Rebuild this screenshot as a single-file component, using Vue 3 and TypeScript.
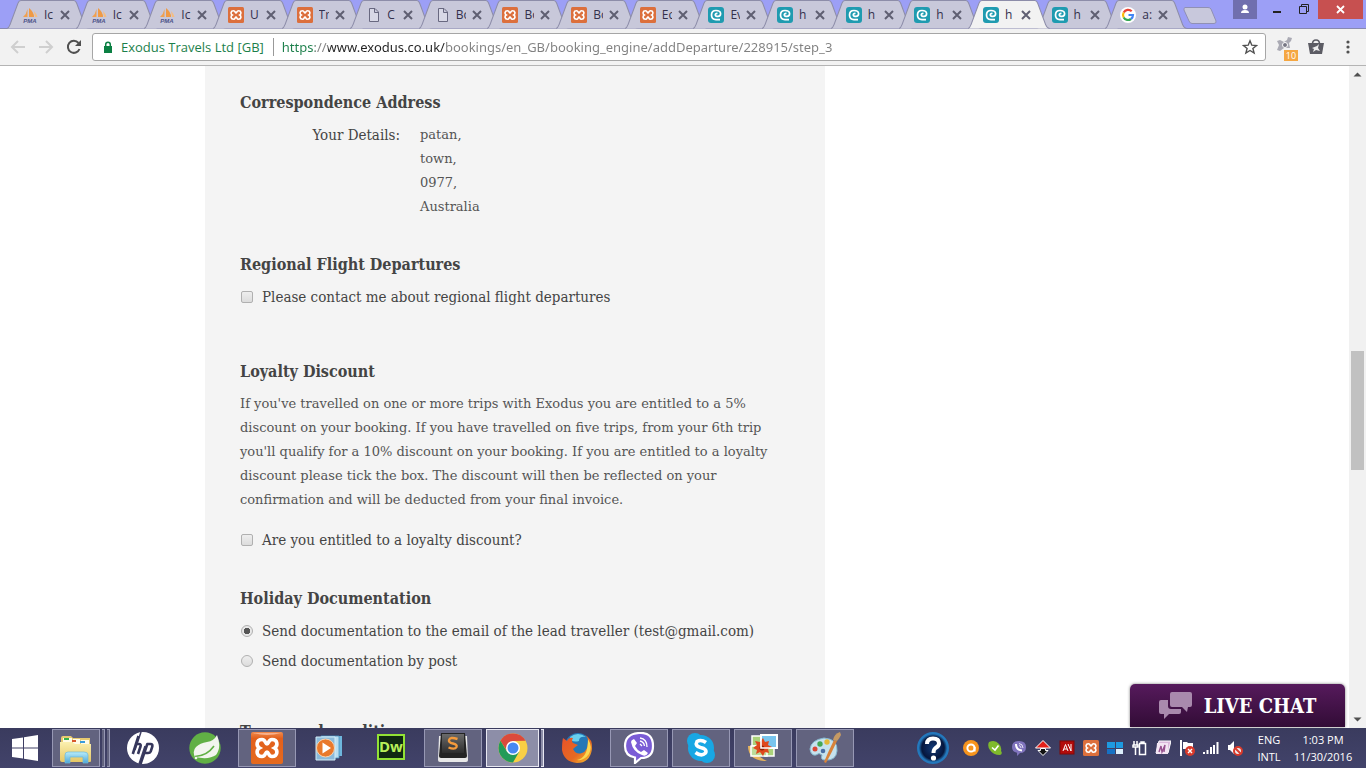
<script setup lang="ts">
import { ref } from 'vue'

interface Tab { icon: string; label: string; active?: boolean }
interface Task { icon: string; name: string; state?: 'open' | 'active'; stacked?: boolean }

const tabs: Tab[] = [
  { icon: 'pma', label: 'Ic' },
  { icon: 'pma', label: 'Ic' },
  { icon: 'pma', label: 'Ic' },
  { icon: 'xampp', label: 'U' },
  { icon: 'xampp', label: 'Tr' },
  { icon: 'doc', label: 'C' },
  { icon: 'doc', label: 'Bo' },
  { icon: 'xampp', label: 'Bo' },
  { icon: 'xampp', label: 'Bo' },
  { icon: 'xampp', label: 'Ec' },
  { icon: 'exodus', label: 'Ev' },
  { icon: 'exodus', label: 'h' },
  { icon: 'exodus', label: 'h' },
  { icon: 'exodus', label: 'h' },
  { icon: 'exodus', label: 'h', active: true },
  { icon: 'exodus', label: 'h' },
  { icon: 'google', label: 'a:' },
]

const tasks: Task[] = [
  { icon: 'explorer', name: 'File Explorer', state: 'open', stacked: true },
  { icon: 'hp', name: 'HP' },
  { icon: 'spring', name: 'Spring' },
  { icon: 'xampp-big', name: 'XAMPP', state: 'open' },
  { icon: 'media', name: 'Media Player' },
  { icon: 'dw', name: 'Dreamweaver' },
  { icon: 'sublime', name: 'Sublime Text', state: 'open' },
  { icon: 'chrome', name: 'Chrome', state: 'active', stacked: true },
  { icon: 'firefox', name: 'Firefox' },
  { icon: 'viber', name: 'Viber', state: 'open' },
  { icon: 'skype', name: 'Skype', state: 'open' },
  { icon: 'photos', name: 'Photo Gallery', state: 'open' },
  { icon: 'paint', name: 'Paint', state: 'open' },
]

const tray: string[] = ['avast', 'agent', 'viber-s', 'arrows', 'adobe', 'xampp', 'tiles', 'battery', 'note', 'flag', 'signal', 'mute']

const address = ['patan,', 'town,', '0977,', 'Australia']
const url = ref('https://www.exodus.co.uk/bookings/en_GB/booking_engine/addDeparture/228915/step_3')
const regional = ref(false)
const loyalty = ref(false)
const documentation = ref('email')
</script>

<template>
  <div class="desktop">
    <svg class="defs" aria-hidden="true">
      <defs>
        <linearGradient id="g-folder" x1="0" y1="0" x2="0" y2="1"><stop offset="0" stop-color="#fbf0b0" /><stop offset="1" stop-color="#e5c765" /></linearGradient>
        <linearGradient id="g-blue" x1="0" y1="0" x2="0" y2="1"><stop offset="0" stop-color="#b8ecfa" /><stop offset="1" stop-color="#4fa8d8" /></linearGradient>
        <linearGradient id="g-orange" x1="0" y1="0" x2="0" y2="1"><stop offset="0" stop-color="#f08a4c" /><stop offset=".2" stop-color="#e2601c" /><stop offset="1" stop-color="#e56a1e" /></linearGradient>
        <linearGradient id="g-key" x1="0" y1="0" x2="0" y2="1"><stop offset="0" stop-color="#6a6a6a" /><stop offset="1" stop-color="#2d2d2d" /></linearGradient>
        <radialGradient id="g-help"><stop offset="0" stop-color="#123a78" /><stop offset=".75" stop-color="#06163c" /><stop offset="1" stop-color="#2d8fd8" /></radialGradient>
        <linearGradient id="g-fox" x1="0" y1="0" x2="1" y2="1"><stop offset="0" stop-color="#e8502a" /><stop offset=".6" stop-color="#e66a22" /><stop offset="1" stop-color="#f8c830" /></linearGradient>
      </defs>
      <symbol id="i-pma" viewBox="0 0 16 16">
        <path d="M5.500 2 L5.500 10 L1 10 Q4.500 7 5.500 2Z" fill="#f0a050" /><path d="M7 1 Q12 5 12 10 L7 10Z" fill="#ef9a45" /><path d="M12 4 Q15 7 15.500 10 L13 10Z" fill="#f6bd80" />
        <text x="8" y="16" text-anchor="middle" font-family="Liberation Sans" font-size="6" font-weight="700" font-style="italic" fill="#4c5288">PMA</text>
      </symbol>
      <symbol id="i-xampp" viewBox="0 0 32 32">
        <rect width="32" height="32" rx="3" fill="#dc6f3c" />
        <path d="M11 7.500 C5 7.500 5 14 8.500 16 C5 18 5 24.500 11 24.500 C15 24.500 14 20 16 20 C18 20 17 24.500 21 24.500 C27 24.500 27 18 23.500 16 C27 14 27 7.500 21 7.500 C17 7.500 18 12 16 12 C14 12 15 7.500 11 7.500Z" fill="none" stroke="#fff" stroke-width="3.200" />
      </symbol>
      <symbol id="i-doc" viewBox="0 0 16 16">
        <path d="M4.500 1.500 H10 L13.500 5 V14.500 H4.500Z M9.500 1.500 V5.500 H13.500" fill="#d8d8e6" stroke="#686880" />
      </symbol>
      <symbol id="i-exodus" viewBox="0 0 16 16">
        <rect width="16" height="16" rx="3" fill="#1f9bb0" />
        <path d="M9.500 6.500 Q7.300 6.200 7.300 7.800 Q7.300 9.400 9 9.400 H10 Q12.600 9.400 12.600 6.500 Q12.300 3.500 8 3.500 Q3.500 3.500 3.500 8 Q3.500 12.500 8 12.700 H12" fill="none" stroke="#fff" stroke-width="1.700" />
      </symbol>
      <symbol id="i-google" viewBox="0 0 16 16">
        <circle cx="8" cy="8" r="8" fill="#fff" />
        <g fill="none" stroke-width="2.200"><path d="M11.700 4.300 A5 5 0 0 0 3.700 5.500" stroke="#ea4335" /><path d="M3.700 5.500 A5 5 0 0 0 3.700 10.500" stroke="#fbbc05" /><path d="M3.700 10.500 A5 5 0 0 0 11 12" stroke="#34a853" /><path d="M11 12 A5 5 0 0 0 13 8 H8.500" stroke="#4285f4" /></g>
      </symbol>
      <symbol id="i-explorer" viewBox="0 0 32 32">
        <path d="M1 6 Q1 4 3 4 H11 L13 6 H30 V23 H1Z" fill="#e6ca70" /><path d="M3 6 H12 V12 H3Z M13 7 H20 V12 H13Z M21 8 H29 V13 H21Z" fill="#fffbe6" />
        <path d="M4 6h5v2H4z" fill="#35b04a" /><path d="M12 8h4v2h-4z" fill="#d8582c" /><path d="M20 9h5v2h-5z" fill="#3b9cdc" />
        <path d="M0 10 H12 L15 12 H31 V29 Q31 30 30 30 H2 Q0 30 0 28Z" fill="url(#g-folder)" />
        <path d="M5 31 V23 Q5 20 8 20 H24 Q28 20 28 23 V31 H23 V25 H10 V31Z" fill="url(#g-blue)" stroke="#6bb9dd" stroke-width=".7" />
      </symbol>
      <symbol id="i-hp" viewBox="0 0 32 32">
        <circle cx="16" cy="16" r="16" fill="#fff" />
        <path d="M14 0 L8 18 M18 14 L12 32" stroke="#404066" stroke-width="1.500" />
        <g fill="none" stroke="#36375c" stroke-width="2.600"><path d="M11.500 4 L5.800 22 M9.200 12 H12 Q14.300 12 13.500 14.500 L11 22" /><path d="M20.500 11.500 L13.500 32 M19.800 12 H23.500 Q26 12 25.200 15 L23.700 19.500 Q23 21 21 21 H17.500" /></g>
      </symbol>
      <symbol id="i-spring" viewBox="0 0 32 32">
        <circle cx="16" cy="16" r="15.700" fill="#61b045" />
        <path d="M28 3 Q33 15 27 23 Q20 28 6 25 Q3 19 7 15 Q11 11 18 10 Q25 9 28 3Z" fill="#f2f5ee" /><path d="M6 24.500 Q18 24 25 14" fill="none" stroke="#61b045" stroke-width="1.600" /><circle cx="7" cy="26" r="1.300" fill="#f2f5ee" />
      </symbol>
      <symbol id="i-xampp-big" viewBox="0 0 32 32">
        <rect width="32" height="32" rx="2" fill="url(#g-orange)" /><path d="M2 1 H30 Q16 5 2 1Z" fill="#f8b08a" />
        <path d="M11 7.500 C5 7.500 5 14 8.500 16 C5 18 5 24.500 11 24.500 C15 24.500 14 20 16 20 C18 20 17 24.500 21 24.500 C27 24.500 27 18 23.500 16 C27 14 27 7.500 21 7.500 C17 7.500 18 12 16 12 C14 12 15 7.500 11 7.500Z" fill="none" stroke="#fff" stroke-width="3.600" />
      </symbol>
      <symbol id="i-media" viewBox="0 0 32 32">
        <path d="M12 4 H29 V24 H12Z" fill="#6eb7dd" /><path d="M8 4 H26 V26 H8Z" fill="#b9def0" stroke="#4793c0" stroke-width=".8" /><path d="M3 5 H22 V28 H3Z" fill="#8bbada" stroke="#d2edf8" />
        <circle cx="12.500" cy="16" r="9" fill="#e9792b" stroke="#f8d4b0" /><path d="M9.500 10.500 L18 16 L9.500 21.500Z" fill="#fff" />
      </symbol>
      <symbol id="i-dw" viewBox="0 0 32 32">
        <rect x="3" y="3" width="26" height="24" fill="#102a12" stroke="#92e335" stroke-width="2" />
        <text x="16" y="20" text-anchor="middle" font-family="Open Sans" font-size="15" font-weight="700" fill="#b8f05a">Dw</text>
      </symbol>
      <symbol id="i-sublime" viewBox="0 0 32 32">
        <path d="M2 4 H30 L31 28 Q31 30 29 30 H3 Q1 30 1 28Z" fill="#e8e8e8" /><path d="M4 1 H28 L30 24 Q30 26 28 26 H4 Q2 26 2 24Z" fill="#242424" /><path d="M5 2 H27 V21 H5Z" fill="url(#g-key)" />
        <path d="M20.500 7 Q13 4.500 12 8 Q11.500 10.500 16 11.500 Q20.500 12.500 19.500 15 Q18 18 11.500 15.500" fill="none" stroke="#f39a3c" stroke-width="2.400" />
      </symbol>
      <symbol id="i-chrome" viewBox="0 0 32 32">
        <circle cx="16" cy="16" r="14.500" fill="#f9cf45" />
        <path d="M3.400 8.800 A14.500 14.500 0 0 1 28.600 8.800 L16 9 L10 19Z" fill="#db4a3c" /><path d="M3.400 8.800 A14.500 14.500 0 0 0 16 30.500 L22 20 L10 19.500Z" fill="#229b58" /><circle cx="16" cy="16" r="7" fill="#fff" /><circle cx="16" cy="16" r="5.500" fill="#4688f1" />
      </symbol>
      <symbol id="i-firefox" viewBox="0 0 32 32">
        <circle cx="17" cy="14" r="13" fill="#2478b8" /><path d="M9 5 Q17 -1 25 5 Q18 4 18 9 Q10 11 9 5Z" fill="#68cfee" />
        <path d="M2 6 L6 9 Q8 5 12 6 Q10 9 12 11 L17 13 Q14 15 12 17 Q15 23 21 21 Q27 19 27 9 Q27 5 24 3 Q32 7 31 17 Q29 31 16 31 Q3 30 1 18 Q1 10 2 6Z" fill="url(#g-fox)" /><path d="M27 7 Q32 15 28 22 Q23 29 16 28 Q27 26 27 7Z" fill="#fbd850" />
      </symbol>
      <symbol id="i-viber" viewBox="0 0 32 32">
        <path d="M16 1 Q30 0 30 14 Q30 26 18 26 L12 31 V25.500 Q2 24 2 14 Q2 2 16 1Z" fill="#7a5cd6" stroke="#fff" stroke-width="2.200" />
        <path d="M11 7 L14 11 L12 14 Q14 18 18 20 L21 18 L25 21 Q23 25 19 23 Q10 20 8 10 Q8 8 11 7Z" fill="#fff" /><path d="M17 6 Q24 7 24 15 M17 9 Q21 10 21.500 14 M17 12 L19 14" fill="none" stroke="#fff" stroke-width="1.300" />
      </symbol>
      <symbol id="i-skype" viewBox="0 0 32 32">
        <circle cx="16" cy="16" r="13" fill="#18a7e4" /><circle cx="10" cy="9" r="8" fill="#18a7e4" /><circle cx="22" cy="23" r="8" fill="#18a7e4" />
        <path d="M21 10.500 Q16 7 12 9.500 Q9.500 14 15.500 15.500 Q22.500 17 20.500 21 Q16.500 25 10.500 20.500" fill="none" stroke="#fff" stroke-width="3.600" />
      </symbol>
      <symbol id="i-photos" viewBox="0 0 32 32">
        <path d="M1 14 Q1 29 20 29 Q8 24 7 14Z" fill="#e6b45e" /><path d="M5 4 H15 V14 H5Z M18 15 H27 V24 H18Z" fill="#aad27a" stroke="#fff" stroke-width="1.500" />
        <path d="M4 14 H20 V24 H4Z" fill="#bcdc9a" stroke="#fff" stroke-width="1.500" />
        <path d="M14 3 H30 V16 H14Z" fill="#79c5ee" stroke="#fff" stroke-width="2" />
        <path d="M16 6 L18 10 L22 9 L21 13 L25 15 L21 17 L22 21 L18 20 L16 24 L13 20 L9 22 L10 18 L6 16 L10 13 L8 9 L13 10Z" fill="#df491d" /><circle cx="15" cy="16" r="2.500" fill="#8f2308" />
        <path d="M14 4 V16 H29" fill="none" stroke="#fff" stroke-width="1.600" />
      </symbol>
      <symbol id="i-paint" viewBox="0 0 32 32">
        <path d="M15 6 Q29 7 28 19 Q27 29 16 28 Q11 28 13 23 Q10 20 7 23 Q2 24 1 17 Q2 8 15 6Z" fill="#c6e2ee" stroke="#86b9d0" /><circle cx="6" cy="17" r="2.500" fill="#d94736" /><circle cx="11" cy="12" r="2.700" fill="#43a755" /><circle cx="18" cy="10" r="2.700" fill="#e2b838" /><circle cx="14" cy="19" r="2.300" fill="#4a6fa4" />
        <path d="M25 8 L28 9 Q23 20 17 31 L15 30 Q20 18 25 8Z" fill="#d8833a" /><path d="M24 8 Q25 2 31 0 L32 3 Q30 7 28 9Z" fill="#c69a64" />
      </symbol>
      <symbol id="i-avast" viewBox="0 0 16 16"><circle cx="8" cy="8" r="8" fill="#f7941d" /><circle cx="8" cy="8" r="3.600" fill="none" stroke="#fff" stroke-width="2" /><path d="M11.600 7 V11.500" stroke="#fff" stroke-width="2" /></symbol>
      <symbol id="i-agent" viewBox="0 0 16 16"><path d="M2 2 Q8 -1 12 4 Q15 7 14 11 Q16 14 13 15 Q6 15 3 10 Q0 6 2 2Z" fill="#7fba2c" /><path d="M5 7.500 L8 10 L11.500 5.500" fill="none" stroke="#fff" stroke-width="1.600" /></symbol>
      <symbol id="i-viber-s" viewBox="0 0 16 16"><path d="M8 1 Q15 1 15 7 Q15 13 9 13 L6 16 V12.700 Q1 12 1 7 Q1 1 8 1Z" fill="#8074bd" /><path d="M5 4 Q5 10 11 10.500" stroke="#fff" stroke-width="2" fill="none" /><path d="M8 3.500 Q12 4 12 8 M8 5.500 Q10 6 10 8" stroke="#fff" stroke-width=".8" fill="none" /></symbol>
      <symbol id="i-arrows" viewBox="0 0 16 16"><path d="M8 .5 L15.500 8 H.5Z" fill="#e32019" stroke="#fff" /><path d="M5.500 8.500 H10.500 V10.500 H13 L8 15.500 L3 10.500 H5.500Z" fill="#111" stroke="#fff" /></symbol>
      <symbol id="i-adobe" viewBox="0 0 16 16"><rect x="1" y="1" width="14" height="13" fill="#b30b0b" stroke="#7e0909" /><path d="M4 11 L6.500 4.500 L9 11 M5 9 H8 M9 4 L12 11 V4" stroke="#fff" fill="none" /></symbol>
      <symbol id="i-tiles" viewBox="0 0 16 16"><path d="M0 2h8v6H0zM9 2h7v6H9z" fill="#1e9ae0" /><path d="M0 9h8v5H0z" fill="#1671c4" /><path d="M9 9h7v5H9z" fill="#dceefb" /></symbol>
      <symbol id="i-battery" viewBox="0 0 16 16"><path d="M8.500 3.500 H14.500 V14.500 H8.500Z M10 2h3v1h-3z" stroke="#fff" stroke-width="1.500" fill="none" /><path d="M3 1 V5 M6 1 V5 M1.500 5 H7 V7 H2 V5 M4.500 7 V15" stroke="#fff" stroke-width="1.500" fill="none" /></symbol>
      <symbol id="i-note" viewBox="0 0 16 16"><path d="M4 1 H16 L13 13 H1Z" fill="#dbb9dc" stroke="#fff" /><path d="M2 3 H13 V14 H1Z" fill="#f3e5f3" /><path d="M4 12 L6 6 L7 12 L10 5 L9 12" stroke="#96508e" stroke-width="1.400" fill="none" /></symbol>
      <symbol id="i-flag" viewBox="0 0 16 16"><path d="M2 0 V16" stroke="#fff" stroke-width="2" /><path d="M4 2 H8 L9 3 H14 V9 H4Z" fill="#fff" /><circle cx="11" cy="11" r="5" fill="#d93a2b" /><path d="M9 9 L13 13 M13 9 L9 13" stroke="#fff" stroke-width="1.400" /></symbol>
      <symbol id="i-signal" viewBox="0 0 16 16"><path d="M1 14 V12 M4.500 14 V10 M8 14 V7 M11 14 V5 M14.500 14 V2" stroke="#fff" stroke-width="2" /></symbol>
      <symbol id="i-mute" viewBox="0 0 16 16"><path d="M1 5 H3 L7 1 V14 L3 10 H1Z" fill="#fff" /><circle cx="11" cy="11" r="4" fill="#eee" stroke="#d93a2b" stroke-width="2" /><path d="M8 8 L14 14" stroke="#d93a2b" stroke-width="2" /></symbol>
    </svg>

    <header class="titlebar">
      <nav class="tabs" aria-label="Tabs">
        <div v-for="(tab, i) in tabs" :key="i" class="tab" :class="{ active: tab.active }">
          <svg class="tab-shape" viewBox="0 0 82 27" preserveAspectRatio="none"><path d="M0 26.500 Q2 26 3 23 L11 3 Q12 .5 14 .5 H67 Q69 .5 70 3 L78 23 Q79 26 82 26.500" /></svg>
          <svg class="favicon"><use :href="`#i-${tab.icon}`" /></svg>
          <span class="tab-label">{{ tab.label }}</span>
          <button class="tab-close" aria-label="Close tab"><svg viewBox="0 0 10 10"><path d="M1 1 L9 9 M9 1 L1 9" /></svg></button>
        </div>
      </nav>
      <button class="new-tab" aria-label="New tab"><svg viewBox="0 0 34 17"><path d="M2 .5 H25 Q27 .5 28 2 L33 14 Q33.500 16.500 31 16.500 H9 Q7 16.500 6 14 L1 3 Q.5 1 2 .5Z" fill="#c8c8dc" stroke="#9090b4" /></svg></button>
      <div class="window-controls">
        <button class="user" aria-label="Profile"><svg viewBox="0 0 24 19"><circle cx="12" cy="7" r="2.500" fill="#fff" /><path d="M8 13 Q8 10 12 10 Q16 10 16 13Z" fill="#fff" /></svg></button>
        <button class="min" aria-label="Minimise"><svg viewBox="0 0 10 19"><path d="M1 12 H9" stroke="#222" stroke-width="2" /></svg></button>
        <button class="restore" aria-label="Restore"><svg viewBox="0 0 12 19"><path d="M1.500 6.500 H8.500 V13.500 H1.500Z M3.500 6 V4.500 H10.500 V11.500 H9" fill="none" stroke="#222" /></svg></button>
        <button class="close" aria-label="Close"><svg viewBox="0 0 45 19"><path d="M19 6 L26 13 M26 6 L19 13" stroke="#fff" stroke-width="1.800" /></svg></button>
      </div>
    </header>

    <div class="toolbar">
      <div class="nav-buttons">
        <button aria-label="Back"><svg viewBox="0 0 16 16" stroke="#cfcfcf"><path d="M15 8 H2 M8 2 L2 8 L8 14" /></svg></button>
        <button aria-label="Forward"><svg viewBox="0 0 16 16" stroke="#cfcfcf"><path d="M1 8 H14 M8 2 L14 8 L8 14" /></svg></button>
        <button aria-label="Reload"><svg viewBox="0 0 16 16" stroke="#505050"><path d="M13.500 10 A6 6 0 1 1 12.500 4" /><path d="M15 1 V7 H9Z" fill="#505050" stroke="none" /></svg></button>
      </div>
      <div class="omnibox">
        <button class="identity"><svg viewBox="0 0 10 13"><path d="M1 5 H9 V12 H1Z" fill="#0b8043" /><path d="M2.700 6 V3.500 Q2.700 1.200 5 1.200 Q7.300 1.200 7.300 3.500 V6" fill="none" stroke="#0b8043" stroke-width="1.500" /></svg>Exodus Travels Ltd [GB]</button>
        <input v-model="url" class="url" type="text" aria-label="Address" spellcheck="false">
        <button class="star" aria-label="Bookmark"><svg viewBox="0 0 16 16"><path d="M8 1.800 L9.800 6.200 L14.500 6.500 L10.900 9.500 L12.100 14 L8 11.500 L3.900 14 L5.100 9.500 L1.500 6.500 L6.200 6.200Z" fill="none" stroke="#505050" stroke-width="1.400" /></svg></button>
      </div>
      <div class="extensions">
        <button class="ext" aria-label="Extension, 10 alerts">
          <svg viewBox="0 0 22 22"><path d="M1 14 L3 9 L1 5 L4 4 L8 6 L11 4 L12 1 L16 2 L15 5 L13 7 L14 12 L8 12 L4 15Z" fill="#aaaab4" /><circle cx="9" cy="9" r="2.500" fill="#777784" stroke="#fff" /></svg><span class="badge">10</span>
        </button>
        <button class="bag" aria-label="Shopping extension"><svg viewBox="0 0 16 16"><path d="M0 4 H16 L14 15 H2Z" fill="#5c5c64" /><path d="M4.500 5 Q4.500 1 8 1 Q11.500 1 11.500 5" fill="none" stroke="#5c5c64" stroke-width="1.600" /><path d="M4 9 L9 7 L11 5 L10 9 L12 12 L8 11 L5 13 L6 10Z" fill="#eee" /></svg></button>
        <button class="menu" aria-label="Menu"><svg viewBox="0 0 4 16"><circle cx="2" cy="3" r="1.600" /><circle cx="2" cy="8" r="1.600" /><circle cx="2" cy="13" r="1.600" /></svg></button>
      </div>
    </div>

    <div class="viewport">
      <main class="page">
        <form class="panel" @submit.prevent>
          <section class="address">
            <h2>Correspondence Address</h2>
            <dl><dt>Your Details:</dt><dd><span v-for="line in address" :key="line">{{ line }}</span></dd></dl>
          </section>
          <section class="regional">
            <h2>Regional Flight Departures</h2>
            <label><input v-model="regional" type="checkbox">Please contact me about regional flight departures</label>
          </section>
          <section class="loyalty">
            <h2>Loyalty Discount</h2>
            <p>If you've travelled on one or more trips with Exodus you are entitled to a 5%<br>discount on your booking. If you have travelled on five trips, from your 6th trip<br>you'll qualify for a 10% discount on your booking. If you are entitled to a loyalty<br>discount please tick the box. The discount will then be reflected on your<br>confirmation and will be deducted from your final invoice.</p>
            <label><input v-model="loyalty" type="checkbox">Are you entitled to a loyalty discount?</label>
          </section>
          <section class="documents">
            <h2>Holiday Documentation</h2>
            <label><input v-model="documentation" type="radio" name="documentation" value="email">Send documentation to the email of the lead traveller (test@gmail.com)</label>
            <label><input v-model="documentation" type="radio" name="documentation" value="post">Send documentation by post</label>
          </section>
          <section>
            <h2>Terms and conditions</h2>
          </section>
        </form>
      </main>
      <button class="chat"><svg viewBox="0 0 33 27"><path d="M13 0 H31 Q33 0 33 2 V13 Q33 15 31 15 H29 L28 20 L23 15 H13 Q11 15 11 13 V2 Q11 0 13 0Z M9 8 H2 Q0 8 0 10 V20 Q0 22 2 22 H5 V27 L10 22 H20 Q22 22 22 20 V17 H12 Q9 17 9 14Z" /></svg>LIVE CHAT</button>
      <div class="scrollbar" aria-hidden="true">
        <svg class="arrow" viewBox="0 0 17 17"><path d="M4.500 10.500 L8.500 6.500 L12.500 10.500Z" fill="#505050" /></svg>
        <span class="before"></span><span class="thumb"></span><span class="after"></span>
        <svg class="arrow" viewBox="0 0 17 17"><path d="M4.500 6.500 L8.500 10.500 L12.500 6.500Z" fill="#505050" /></svg>
      </div>
    </div>

    <footer class="taskbar">
      <button class="start" aria-label="Start"><svg viewBox="0 0 26 26"><path d="M0 4 L11 2.500 V12.500 H0Z M12 2.300 L26 0 V12.500 H12Z M0 13.500 H11 V23.500 L0 22Z M12 13.500 H26 V26 L12 23.700Z" fill="#fff" /></svg></button>
      <div class="tasks">
        <button v-for="task in tasks" :key="task.icon" class="task" :class="[task.state, { stacked: task.stacked }]" :aria-label="task.name">
          <span class="face"><svg><use :href="`#i-${task.icon}`" /></svg></span>
          <span v-if="task.stacked" class="edge"></span>
          <span v-if="task.icon === 'explorer'" class="edge"></span>
        </button>
      </div>
      <button class="help" aria-label="Help"><svg viewBox="0 0 32 32"><circle cx="16" cy="16" r="15" fill="url(#g-help)" stroke="#2378bc" stroke-width="2" /><path d="M10 12 Q10 6.500 16 6.500 Q22 6.500 22 11.500 Q22 14 18.500 16 Q16.500 17.500 16.500 21" fill="none" stroke="#fff" stroke-width="4" /><circle cx="16.500" cy="26" r="2.600" fill="#fff" /></svg></button>
      <div class="tray"><svg v-for="t in tray" :key="t"><use :href="`#i-${t}`" /></svg></div>
      <div class="lang"><span>ENG</span><span>INTL</span></div>
      <time class="clock" datetime="2016-11-30T13:03"><span>1:03 PM</span><span>11/30/2016</span></time>
    </footer>
  </div>
</template>

<style>
html, body { margin: 0; overflow: hidden; }
</style>

<style scoped>
* { box-sizing: border-box; }
.desktop { display: flex; flex-direction: column; height: 100vh; overflow: hidden; background: #fff; font-family: "Open Sans", "Noto Sans", sans-serif; }
.defs { position: absolute; width: 0; height: 0; }
button { display: flex; align-items: center; justify-content: center; margin: 0; padding: 0; border: 0; background: none; font: inherit; color: inherit; }
svg { display: block; flex: none; }

.titlebar { display: flex; flex: none; height: 29px; padding-left: 7px; background: #9c9ff6; border-bottom: 1px solid #8889b0; }
.tabs { display: flex; flex: 0 1 1167px; min-width: 0; }
.tab { position: relative; display: flex; flex: 1 1 0; align-items: center; min-width: 0; height: 29px; padding-left: 15px; }
.tab.active { z-index: 2; }
.tab-shape { position: absolute; left: 0; top: 0; width: calc(100% + 13px); height: 29px; fill: #c8c8da; stroke: #8d8da9; }
.active .tab-shape { fill: #f2f2f2; }
.favicon { position: relative; width: 16px; height: 16px; }
.tab-label { position: relative; width: 10px; margin: 0 6px; overflow: hidden; white-space: nowrap; font-size: 12px; line-height: 20px; color: #33304c; }
.tab-close { position: relative; }
.tab-close svg { width: 10px; height: 10px; fill: none; stroke: #5f5f72; stroke-width: 2; }
.new-tab { align-self: flex-start; margin: 7px 0 0 9px; }
.new-tab svg { width: 34px; height: 17px; }
.window-controls { display: flex; align-items: flex-start; margin-left: auto; padding-right: 3px; }
.window-controls svg { height: 19px; }
.user { background: #706fae; }
.user svg { width: 24px; }
.min { margin-left: 15px; }
.min svg { width: 10px; }
.restore { margin: 0 8px 0 16px; }
.restore svg { width: 12px; }
.close { background: #c75050; }
.close svg { width: 45px; }

.toolbar { display: flex; flex: none; align-items: center; height: 37px; padding: 0 16px 0 10px; background: #f2f2f2; border-bottom: 1px solid #b4b4b4; }
.nav-buttons { display: flex; gap: 12px; }
.nav-buttons svg { width: 16px; height: 16px; fill: none; stroke-width: 2; }
.omnibox { display: flex; flex: 1; align-items: center; height: 28px; margin-left: 10px; padding: 0 7px 0 10px; background: #fff; border: 1px solid #a6a6a6; border-radius: 3px; font-size: 13px; }
.identity { gap: 8px; height: 18px; padding-right: 9px; border-right: 1px solid #999; color: #1c7f4b; white-space: nowrap; }
.identity svg { width: 10px; height: 13px; }
.url { flex: 1; min-width: 0; height: 24px; margin-left: 8px; padding: 0; border: 0; outline: 0; font-family: "Noto Sans", sans-serif; font-size: 13px; color: transparent; background: linear-gradient(90deg, #1c7f4b 33px, #808080 33px 46px, #222 46px 163px, #808080 163px); -webkit-background-clip: text; background-clip: text; }
.star svg { width: 16px; height: 16px; }
.extensions { display: flex; align-items: center; }
.ext { position: relative; margin-left: 10px; }
.ext svg { width: 22px; height: 22px; }
.badge { position: absolute; right: 0; bottom: -3px; width: 14px; background: #f5a742; color: #fff; font-size: 9px; line-height: 11px; text-align: center; }
.bag { margin-left: 10px; }
.bag svg { width: 16px; height: 16px; }
.menu { margin-left: 22px; }
.menu svg { width: 4px; height: 16px; fill: #505050; }

.viewport { position: relative; display: flex; flex: 1; min-height: 0; overflow: hidden; }
.page { flex: 1; max-width: 939px; margin: 0 auto; font-family: "DejaVu Serif Condensed", "DejaVu Serif", serif; font-size: 15px; line-height: 24px; color: #444; }
.panel { max-width: 620px; padding: 25px 35px; background: #f4f4f4; }
h2 { margin: 0 0 8px; font-size: 16px; line-height: 24px; font-weight: 700; }
p, dd { font-family: "DejaVu Serif", serif; font-size: 13px; color: #555; }
p { margin: 0 0 16px; white-space: nowrap; }
dl { display: flex; margin: 0; }
dt { width: 160px; margin-right: 20px; text-align: right; }
dd { display: flex; flex-direction: column; margin: 0; }
.address { padding-bottom: 34px; }
.regional { padding-bottom: 51px; }
.loyalty { padding-bottom: 35px; }
.documents { padding-bottom: 47px; }
label { display: flex; align-items: center; white-space: nowrap; }
label + label { margin-top: 6px; }
label input { appearance: none; flex: none; width: 12px; height: 12px; margin: 0 9px 0 1px; border: 1px solid #b0b0b0; border-radius: 2px; background: linear-gradient(#eee, #dcdcdc); }
label input[type="radio"] { border-radius: 50%; }
label input[type="radio"]:checked { background: radial-gradient(circle, #555 0 3px, #e8e8e8 3px); }
.chat { position: absolute; right: 21px; bottom: 1px; gap: 12px; width: 215px; height: 43px; border-radius: 5px 5px 0 0; background: linear-gradient(#561a5c, #320c36); box-shadow: 0 0 3px #777; color: #fff; font-family: "DejaVu Serif Condensed", "DejaVu Serif", serif; font-size: 20px; font-weight: 700; white-space: nowrap; }
.chat svg { width: 33px; height: 27px; fill: #a98aad; }
.scrollbar { display: flex; flex: none; flex-direction: column; align-items: center; width: 17px; background: #f1f1f1; }
.arrow { width: 17px; height: 17px; }
.before { flex: 268; }
.thumb { flex: 119; width: 13px; background: #c1c1c1; }
.after { flex: 241; }

.taskbar { display: flex; flex: none; align-items: center; height: 40px; background: linear-gradient(#3a3b5e, #42436a); color: #fff; font-size: 11px; }
.start { width: 50px; }
.start svg { width: 26px; height: 26px; }
.tasks { display: flex; gap: 4px; margin-left: 2px; }
.task { gap: 2px; width: 58px; height: 38px; }
.task svg { width: 32px; height: 32px; }
.face { display: flex; flex: 1; align-items: center; justify-content: center; height: 38px; border: 1px solid transparent; }
.open .face, .open .edge { border: 1px solid #9798b4; background: #62637f; }
.active .face, .active .edge { border: 1px solid #e8e8f2; background: #8d8ea8; }
.edge { width: 3px; height: 38px; }
.open .edge, .active .edge { border-left: 0; }
.help { margin-left: auto; }
.help svg { width: 32px; height: 32px; }
.tray { display: flex; gap: 8px; margin-left: 14px; }
.tray svg { width: 16px; height: 16px; }
.lang, .clock { display: flex; flex-direction: column; align-items: center; line-height: 17px; white-space: nowrap; }
.lang { width: 28px; margin-left: 12px; }
.clock { width: 60px; margin: 0 13px 0 10px; }
</style>
